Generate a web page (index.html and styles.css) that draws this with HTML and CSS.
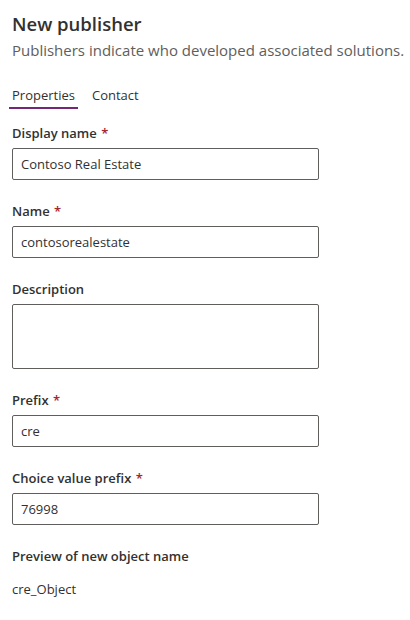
FILE: index.html
```html
<!DOCTYPE html>
<html lang="en">
<head>
<meta charset="utf-8">
<title>New publisher</title>
<link rel="stylesheet" href="styles.css">
</head>
<body>
<div class="panel">
  <header class="head">
    <h1 class="title">New publisher</h1>
    <p class="subtitle">Publishers indicate who developed associated solutions.</p>
  </header>
  <nav class="tabs">
    <span class="tab tab-active">Properties</span>
    <span class="tab">Contact</span>
  </nav>
  <form class="form">
    <div class="field">
      <label class="label">Display name <span class="req">*</span></label>
      <div class="input">Contoso Real Estate</div>
    </div>
    <div class="field">
      <label class="label">Name <span class="req">*</span></label>
      <div class="input">contosorealestate</div>
    </div>
    <div class="field">
      <label class="label">Description</label>
      <div class="input textarea"></div>
    </div>
    <div class="field">
      <label class="label">Prefix <span class="req">*</span></label>
      <div class="input">cre</div>
    </div>
    <div class="field">
      <label class="label">Choice value prefix <span class="req">*</span></label>
      <div class="input">76998</div>
    </div>
    <div class="field">
      <label class="label">Preview of new object name</label>
      <div class="preview">cre_Object</div>
    </div>
  </form>
</div>
</body>
</html>
```

FILE: styles.css
```css
html, body {
  margin: 0;
  padding: 0;
  background: #ffffff;
  overflow: hidden;
}

body {
  font-family: "Open Sans", "Noto Sans", "Liberation Sans", sans-serif;
  color: #323130;
  font-size: 13px;
}

.panel {
  padding: 10px 0 0 12px;
}

.head {
  display: flex;
  flex-direction: column;
}

.title {
  margin: 0;
  font-size: 18.5px;
  font-weight: 600;
  line-height: 28px;
  color: #323130;
}

.subtitle {
  margin: 2px 0 0;
  font-size: 15px;
  line-height: 20px;
  color: #605e5c;
  white-space: nowrap;
}

.tabs {
  display: flex;
  gap: 11px;
  margin: 25px 0 0 -3px;
}

.tab {
  font-size: 13px;
  line-height: 20px;
  padding: 0 3px 2px;
  border-bottom: 2px solid transparent;
  color: #323130;
}

.tab-active {
  border-bottom-color: #742774;
}

.form {
  display: flex;
  flex-direction: column;
  gap: 16px;
  margin-top: 9px;
  width: 307px;
}

.field {
  display: flex;
  flex-direction: column;
}

.label {
  font-size: 13px;
  font-weight: 600;
  line-height: 20px;
  padding: 5px 0;
  color: #323130;
}

.req {
  color: #a4262c;
  margin-left: 1px;
}

.input {
  box-sizing: border-box;
  height: 32px;
  border: 1px solid #605e5c;
  border-radius: 2px;
  padding: 0 8px;
  font-size: 13px;
  line-height: 30px;
  color: #323130;
}

.textarea {
  height: 65px;
}

.preview {
  margin-top: 8px;
  font-size: 13px;
  line-height: 20px;
  color: #323130;
}
```
